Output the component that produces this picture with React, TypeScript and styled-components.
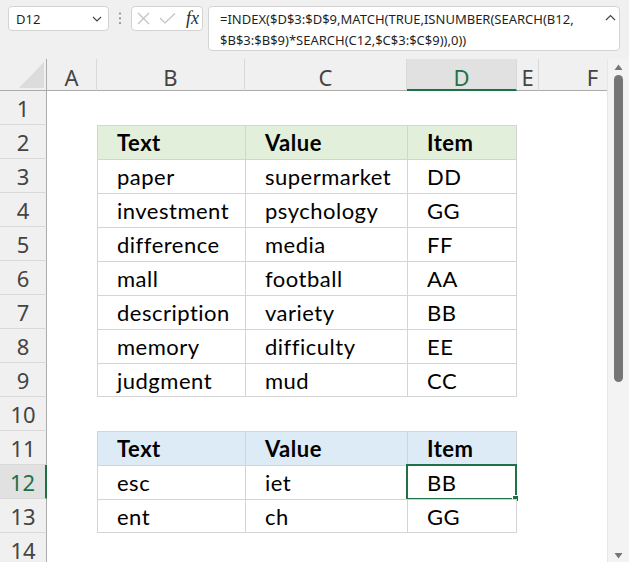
import React from "react";
import styled, { createGlobalStyle } from "styled-components";

const LINE = "#d4d4d4";
const GREEN_FILL = "#e2efda";
const BLUE_FILL = "#ddebf7";
const ACCENT = "#1e7145";
const HEADER_BG = "#f0f0f0";
const HEADER_SEL_BG = "#e1e1e1";

const GlobalStyle = createGlobalStyle`
  html, body { margin: 0; padding: 0; background: #f0f0f0; }
  body { width: 629px; height: 562px; overflow: hidden; }
`;

const Window = styled.div`
  width: 629px;
  height: 562px;
  background: #f0f0f0;
  display: flex;
  flex-direction: column;
  overflow: hidden;
  font-family: "Noto Sans", "Open Sans", sans-serif;
`;

/* ---------- formula bar ---------- */

const FormulaBar = styled.div`
  height: 59px;
  flex: none;
  box-sizing: border-box;
  padding: 6px 0 0 8px;
  display: flex;
  align-items: flex-start;
`;

const NameBox = styled.div`
  width: 101px;
  height: 25px;
  box-sizing: border-box;
  background: #fff;
  border: 1px solid #d3d3d3;
  border-radius: 4px;
  display: flex;
  align-items: center;
  justify-content: space-between;
  padding: 0 6px 0 7px;
  font-size: 13px;
  color: #1f1f1f;
`;

const Grip = styled.div`
  width: 22px;
  height: 25px;
  display: flex;
  align-items: center;
  justify-content: center;
`;

const FxBox = styled.div`
  width: 72px;
  height: 25px;
  box-sizing: border-box;
  background: #fff;
  border: 1px solid #d3d3d3;
  border-radius: 4px;
  display: flex;
  align-items: center;
  padding: 0 0 0 5px;
`;

const FxIcon = styled.span<{ $gap: number }>`
  display: flex;
  align-items: center;
  margin-right: ${(p) => p.$gap}px;
`;

const FxLabel = styled.span`
  font-family: "Liberation Serif", "DejaVu Serif", serif;
  font-style: italic;
  font-size: 18px;
  color: #2b2b2b;
  line-height: 1;
  margin-top: -2px;
`;

const FormulaBox = styled.div`
  margin-left: 5px;
  width: 412px;
  height: 45px;
  box-sizing: border-box;
  background: #fff;
  border: 1px solid #d3d3d3;
  border-radius: 4px;
  display: flex;
  align-items: flex-start;
  padding: 2px 3px 0 11px;
`;

const FormulaText = styled.div`
  flex: 1;
  font-size: 13px;
  line-height: 21px;
  color: #1f1f1f;
  white-space: nowrap;
`;

const CaretWrap = styled.div`
  margin-top: 5px;
  display: flex;
`;

/* ---------- sheet ---------- */

const SheetArea = styled.div`
  flex: 1;
  display: flex;
  min-height: 0;
`;

const Grid = styled.div`
  width: 607px;
  flex: none;
  display: grid;
  grid-template-columns: 47px 50px 148px 162px 110px 22px 108px;
  grid-template-rows: 32px;
  grid-auto-rows: 34px;
  align-content: start;
  background: #fff;
  overflow: hidden;
`;

const Corner = styled.div`
  background: ${HEADER_BG};
  box-sizing: border-box;
  border-right: 1px solid #ababab;
  border-bottom: 1px solid #ababab;
  display: flex;
  align-items: flex-end;
  justify-content: flex-end;
  padding: 0 2px 2px 0;
`;

const ColHeader = styled.div<{ $selected?: boolean }>`
  box-sizing: border-box;
  background: ${(p) => (p.$selected ? HEADER_SEL_BG : HEADER_BG)};
  border-right: 1px solid #d9d9d9;
  border-bottom: ${(p) => (p.$selected ? `2px solid ${ACCENT}` : "1px solid #ababab")};
  display: flex;
  justify-content: center;
  align-items: flex-start;
  padding-top: 7px;
  font-size: 22px;
  line-height: 22px;
  color: ${(p) => (p.$selected ? ACCENT : "#444")};
`;

const RowHeader = styled.div<{ $selected?: boolean }>`
  box-sizing: border-box;
  background: ${(p) => (p.$selected ? HEADER_SEL_BG : HEADER_BG)};
  border-right: ${(p) => (p.$selected ? `2px solid ${ACCENT}` : "1px solid #ababab")};
  border-bottom: 1px solid #d9d9d9;
  display: flex;
  justify-content: center;
  align-items: center;
  padding-top: 1px;
  font-size: 22px;
  line-height: 22px;
  color: ${(p) => (p.$selected ? ACCENT : "#444")};
`;

const Blank = styled.div`
  background: #fff;
`;

const Cell = styled.div<{ $fill?: string; $bold?: boolean; $right?: boolean; $bottom?: boolean }>`
  position: relative;
  box-sizing: border-box;
  min-width: 0;
  padding-left: 19px;
  background: ${(p) => p.$fill ?? "#fff"};
  border-top: 1px solid ${LINE};
  border-left: 1px solid ${LINE};
  border-right: ${(p) => (p.$right ? `1px solid ${LINE}` : "none")};
  border-bottom: ${(p) => (p.$bottom ? `1px solid ${LINE}` : "none")};
  font-family: Lato, "Noto Sans", sans-serif;
  font-size: 22px;
  letter-spacing: 0.5px;
  font-weight: ${(p) => (p.$bold ? 700 : 400)};
  line-height: 33px;
  color: #000;
  white-space: nowrap;
`;

const ActiveFrame = styled.div`
  position: absolute;
  left: -2px;
  top: -2px;
  right: -1px;
  bottom: -1px;
  border: 2px solid ${ACCENT};
  pointer-events: none;
`;

const FillHandle = styled.div`
  position: absolute;
  right: -4px;
  bottom: -4px;
  width: 5px;
  height: 5px;
  background: ${ACCENT};
  border: 1px solid #fff;
`;

const VScroll = styled.div`
  width: 22px;
  flex: none;
  box-sizing: border-box;
  background: #f3f3f3;
  border-left: 1px solid #e6e6e6;
  display: flex;
  flex-direction: column;
  align-items: center;
  padding: 5px 0 2px 0;
`;

const ScrollArrow = styled.div`
  display: flex;
  justify-content: center;
  height: 7px;
`;

const Thumb = styled.div`
  margin-top: 4px;
  width: 9px;
  height: 307px;
  border-radius: 5px;
  background: #767676;
`;

const Spacer = styled.div`
  flex: 1;
`;

/* ---------- data ---------- */

type SheetRow = {
  fill?: string;
  head?: boolean;
  values?: [string, string, string];
  last?: boolean;
};

const COLS = ["A", "B", "C", "D", "E", "F"];

const ROWS: SheetRow[] = [
  {},
  { head: true, fill: GREEN_FILL, values: ["Text", "Value", "Item"] },
  { values: ["paper", "supermarket", "DD"] },
  { values: ["investment", "psychology", "GG"] },
  { values: ["difference", "media", "FF"] },
  { values: ["mall", "football", "AA"] },
  { values: ["description", "variety", "BB"] },
  { values: ["memory", "difficulty", "EE"] },
  { values: ["judgment", "mud", "CC"], last: true },
  {},
  { head: true, fill: BLUE_FILL, values: ["Text", "Value", "Item"] },
  { values: ["esc", "iet", "BB"] },
  { values: ["ent", "ch", "GG"], last: true },
  {},
];

const ACTIVE_ROW = 12;
const ACTIVE_COL = 2; // D within B..D

export default function App() {
  return (
    <>
      <GlobalStyle />
      <Window>
        <FormulaBar>
          <NameBox>
            <span>D12</span>
            <svg width="10" height="6" viewBox="0 0 10 6">
              <path d="M1 1 L5 5 L9 1" fill="none" stroke="#444" strokeWidth="1.2" />
            </svg>
          </NameBox>
          <Grip>
            <svg width="4" height="13" viewBox="0 0 4 13">
              <circle cx="2" cy="1.5" r="1.1" fill="#8e8e8e" />
              <circle cx="2" cy="6.3" r="1.1" fill="#8e8e8e" />
              <circle cx="2" cy="11" r="1.1" fill="#8e8e8e" />
            </svg>
          </Grip>
          <FxBox>
            <FxIcon $gap={9}>
              <svg width="13" height="13" viewBox="0 0 13 13">
                <path d="M1 1 L12 12 M12 1 L1 12" stroke="#c2c2c2" strokeWidth="1.2" fill="none" />
              </svg>
            </FxIcon>
            <FxIcon $gap={10}>
              <svg width="17" height="11" viewBox="0 0 17 11">
                <path d="M1 5 L6 10 L16 0.5" stroke="#c2c2c2" strokeWidth="1.2" fill="none" />
              </svg>
            </FxIcon>
            <FxLabel>fx</FxLabel>
          </FxBox>
          <FormulaBox>
            <FormulaText>
              =INDEX($D$3:$D$9,MATCH(TRUE,ISNUMBER(SEARCH(B12,
              <br />
              $B$3:$B$9)*SEARCH(C12,$C$3:$C$9)),0))
            </FormulaText>
            <CaretWrap>
              <svg width="11" height="7" viewBox="0 0 11 7">
                <path d="M1 6 L5.5 1.5 L10 6" fill="none" stroke="#444" strokeWidth="1.2" />
              </svg>
            </CaretWrap>
          </FormulaBox>
        </FormulaBar>

        <SheetArea>
          <Grid>
            <Corner>
              <svg width="25" height="26" viewBox="0 0 25 26">
                <path d="M0 26 L25 0 L25 26 Z" fill="#dcdcdc" />
              </svg>
            </Corner>
            {COLS.map((c) => (
              <ColHeader key={c} $selected={c === "D"}>
                {c}
              </ColHeader>
            ))}
            {ROWS.map((row, i) => {
              const n = i + 1;
              return (
                <React.Fragment key={n}>
                  <RowHeader $selected={n === ACTIVE_ROW}>{n}</RowHeader>
                  <Blank />
                  {row.values
                    ? row.values.map((v, j) => (
                        <Cell
                          key={j}
                          $fill={row.fill}
                          $bold={row.head}
                          $right={j === 2}
                          $bottom={row.last}
                        >
                          {v}
                          {n === ACTIVE_ROW && j === ACTIVE_COL && (
                            <ActiveFrame>
                              <FillHandle />
                            </ActiveFrame>
                          )}
                        </Cell>
                      ))
                    : [0, 1, 2].map((j) => <Blank key={j} />)}
                  <Blank />
                  <Blank />
                </React.Fragment>
              );
            })}
          </Grid>
          <VScroll>
            <ScrollArrow>
              <svg width="9" height="6" viewBox="0 0 9 6">
                <path d="M0.5 6 L4.5 0.5 L8.5 6 Z" fill="#777" />
              </svg>
            </ScrollArrow>
            <Thumb />
            <Spacer />
            <ScrollArrow>
              <svg width="9" height="6" viewBox="0 0 9 6">
                <path d="M0.5 0 L4.5 5.5 L8.5 0 Z" fill="#777" />
              </svg>
            </ScrollArrow>
          </VScroll>
        </SheetArea>
      </Window>
    </>
  );
}
